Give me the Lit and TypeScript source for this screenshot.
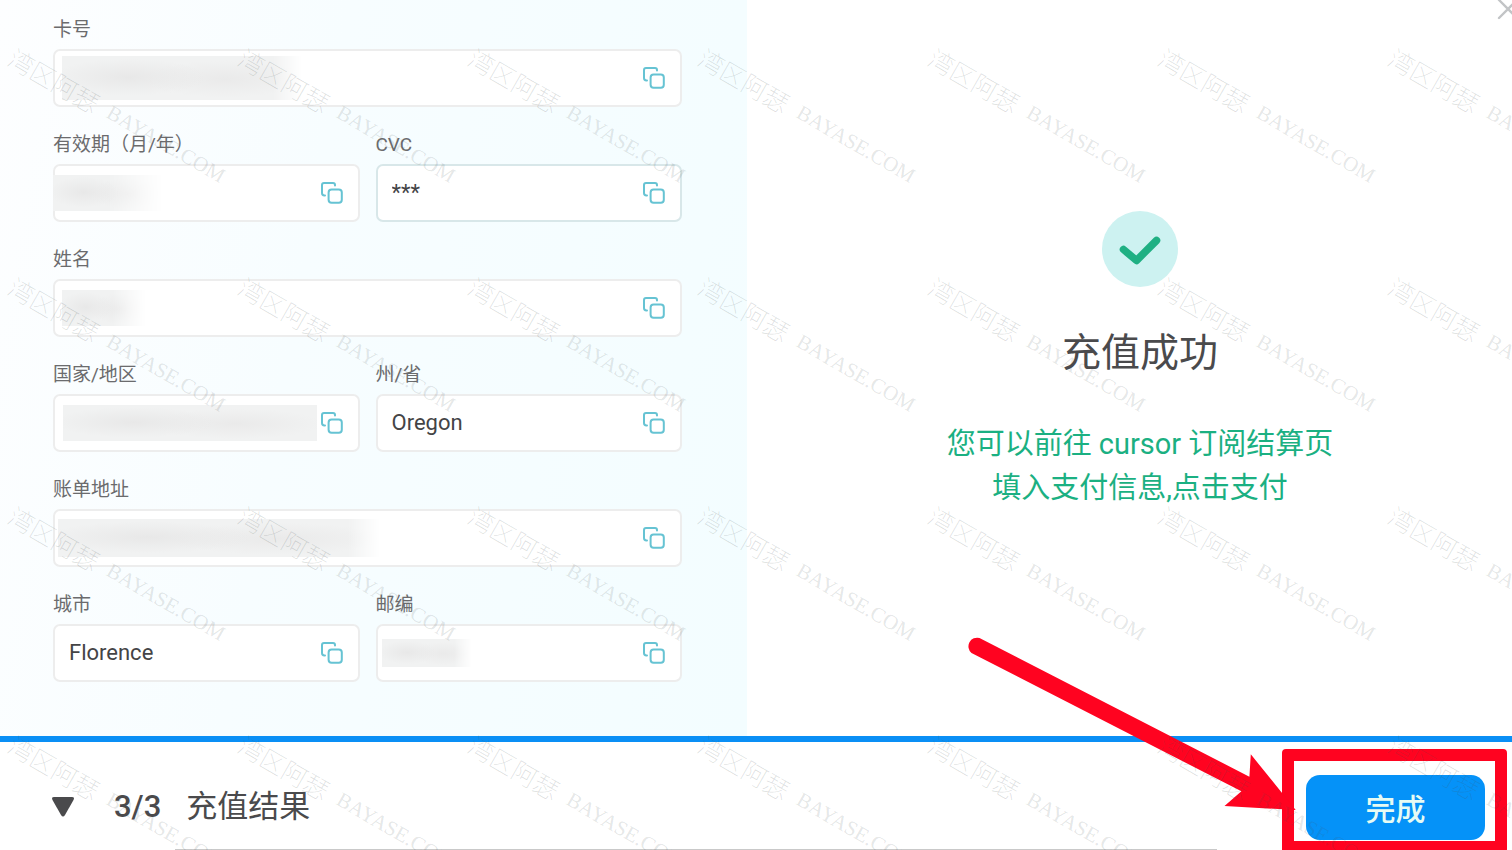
import { LitElement, html, css, svg } from "lit";
import { customElement, property } from "lit/decorators.js";
import { styleMap } from "lit/directives/style-map.js";
import { classMap } from "lit/directives/class-map.js";

interface Mask {
  left: number;
  width: number;
  height: number;
  fade: number;
}

interface Field {
  id: string;
  label: string;
  value: string;
  wide?: boolean;
  active?: boolean;
  mask?: Mask;
}

const FIELDS: Field[] = [
  { id: "card", label: "卡号", value: "", wide: true, mask: { left: 9, width: 240, height: 44, fade: 88 } },
  { id: "expiry", label: "有效期（月/年）", value: "", mask: { left: 0, width: 110, height: 36, fade: 50 } },
  { id: "cvc", label: "CVC", value: "***", active: true },
  { id: "name", label: "姓名", value: "", wide: true, mask: { left: 9, width: 84, height: 36, fade: 60 } },
  { id: "country", label: "国家/地区", value: "", mask: { left: 10, width: 254, height: 36, fade: 100 } },
  { id: "state", label: "州/省", value: "Oregon" },
  { id: "address", label: "账单地址", value: "", wide: true, mask: { left: 5, width: 322, height: 38, fade: 90 } },
  { id: "city", label: "城市", value: "Florence" },
  { id: "zip", label: "邮编", value: "", mask: { left: 6, width: 90, height: 28, fade: 80 } },
];

@customElement("copy-field")
export class CopyField extends LitElement {
  @property({ attribute: false }) field!: Field;

  static styles = css`
    :host {
      display: flex;
      flex-direction: column;
      gap: 7px;
      min-width: 0;
    }
    .label {
      font-size: 19px;
      line-height: 24px;
      color: #6b6b6d;
      white-space: nowrap;
    }
    .box {
      position: relative;
      display: flex;
      align-items: center;
      box-sizing: border-box;
      height: 58px;
      padding: 0 15px 0 14px;
      border: 2px solid #ededed;
      border-radius: 7px;
      background: #fff;
    }
    .box.active {
      border-color: #d8e7e9;
    }
    .input {
      flex: 1;
      min-width: 0;
      padding: 0;
      border: 0;
      outline: 0;
      background: transparent;
      color: #444446;
      font: inherit;
      font-size: 22px;
      line-height: 28px;
    }
    .copy {
      display: flex;
      padding: 0;
      border: 0;
      background: transparent;
      color: #66c3d3;
      cursor: pointer;
    }
    .mask {
      position: absolute;
      top: 0;
      bottom: 0;
      margin: auto 0;
      background:
        radial-gradient(ellipse 32% 42% at 28% 48%, #e8e8e8, transparent),
        radial-gradient(ellipse 34% 42% at 68% 52%, #eaeaea, transparent),
        #f1f2f2;
    }
  `;

  render() {
    const f = this.field;
    const m = f.mask;
    return html`
      <label class="label" for=${f.id}>${f.label}</label>
      <div class=${classMap({ box: true, active: !!f.active })}>
        ${m
          ? html`<span
              class="mask"
              style=${styleMap({
                left: `${m.left - 2}px`,
                width: `${m.width}px`,
                height: `${m.height}px`,
                maskImage: m.fade < 100 ? `linear-gradient(90deg, #000 ${m.fade}%, transparent)` : "none",
              })}
            ></span>`
          : ""}
        <input class="input" id=${f.id} type="text" readonly .value=${f.value} />
        <button class="copy" type="button" aria-label="复制">
          <svg width="22" height="22" viewBox="0 0 22 22" fill="none" stroke="currentColor" stroke-width="2" stroke-linecap="round">
            <path d="M4 13.4H3.4a2.4 2.4 0 0 1-2.4-2.4V3A2 2 0 0 1 3 1H12a2 2 0 0 1 2 2v.6" />
            <rect x="7.6" y="7.6" width="13.2" height="13.2" rx="3" />
          </svg>
        </button>
      </div>
    `;
  }
}

@customElement("water-mark")
export class WaterMark extends LitElement {
  static styles = css`
    :host {
      position: absolute;
      inset: 0;
      z-index: 5;
      overflow: hidden;
      pointer-events: none;
    }
    .tiles {
      display: grid;
      grid-template-columns: repeat(7, 230px);
      grid-auto-rows: 229px;
    }
    .tile {
      display: flex;
      align-items: center;
      justify-content: center;
      box-sizing: border-box;
      padding: 2px 0 0 4px;
    }
    .text {
      display: flex;
      align-items: center;
      gap: 12px;
      flex: none;
      transform: rotate(30deg);
      white-space: nowrap;
      line-height: 26px;
    }
    .han {
      font-family: "Noto Sans CJK SC", sans-serif;
      font-weight: 100;
      font-size: 25px;
      color: rgba(70, 80, 80, 0.2);
    }
    .latin {
      font-family: "Liberation Serif", serif;
      font-size: 21px;
      color: rgba(70, 80, 80, 0.15);
    }
  `;

  render() {
    return html`<div class="tiles" aria-hidden="true">
      ${Array.from(
        { length: 28 },
        () => html`<div class="tile"><span class="text"><span class="han">湾区阿瑟</span><span class="latin">BAYASE.COM</span></span></div>`
      )}
    </div>`;
  }
}

const arrow = svg`<path d="M979.500 638 L1249.400 776.700 L1250.800 754.300 L1295.700 810 L1224.500 806 L1241.400 791.300 L971.500 653 A8.700 8.700 0 0 1 979.500 638 Z" fill="#ff0320" />`;

@customElement("app-root")
export class AppRoot extends LitElement {
  static styles = css`
    :host {
      display: flex;
      flex-direction: column;
      position: relative;
      box-sizing: border-box;
      height: 100vh;
      overflow: hidden;
      background: #fff;
      color: #4a4a4c;
      font-family: Roboto, "Noto Sans CJK SC", sans-serif;
    }
    .main {
      flex: 1;
      display: grid;
      grid-template-columns: 747fr 765fr;
    }
    .form {
      display: grid;
      grid-template-columns: 1fr 1fr;
      align-content: start;
      gap: 26px 16px;
      padding: 18px 65px 0 53px;
      background: linear-gradient(100deg, #fdfeff 0%, #f7fdff 40%, #f3fdff 100%);
    }
    .wide {
      grid-column: 1 / -1;
    }
    .result {
      display: flex;
      flex-direction: column;
      align-items: center;
      padding: 211px 0 0 21px;
      text-align: center;
    }
    .badge {
      display: block;
    }
    .title {
      margin: 38px 0 0;
      font-size: 39px;
      line-height: 56px;
      font-weight: 400;
    }
    .hint {
      margin: 41px 0 0;
      font-size: 29px;
      line-height: 44px;
      color: #1bb082;
    }
    .close {
      position: absolute;
      top: -3px;
      right: -8px;
      display: flex;
      padding: 0;
      border: 0;
      background: transparent;
      color: #c2c4c6;
    }
    .footer {
      display: flex;
      align-items: center;
      box-sizing: border-box;
      height: 114px;
      padding: 22px 27px 0 51px;
      border-top: 6px solid #0a8ff5;
    }
    .toggle {
      display: flex;
      padding: 0;
      border: 0;
      background: transparent;
      color: #4a4a4c;
    }
    .step {
      margin-left: 39px;
      font-size: 31px;
      line-height: 40px;
      font-weight: 500;
    }
    .name {
      margin-left: 25px;
      font-size: 31px;
      line-height: 40px;
    }
    .action {
      position: relative;
      margin-left: auto;
    }
    .done {
      display: block;
      width: 179px;
      height: 65px;
      padding: 0;
      border: 0;
      border-radius: 14px;
      background: #0592f8;
      color: #e6fbf4;
      font: inherit;
      font-size: 30px;
      font-weight: 500;
    }
    .frame {
      position: absolute;
      inset: -26px -22px -13px -24px;
      border: 12px solid #ff0320;
      border-radius: 4px;
      pointer-events: none;
    }
    .arrow {
      position: absolute;
      right: 179px;
      bottom: 0;
      pointer-events: none;
    }
    .rule {
      position: absolute;
      left: 175px;
      right: 295px;
      bottom: 0;
      height: 1px;
      background: #c9c9c9;
    }
  `;

  render() {
    return html`
      <main class="main">
        <form class="form">
          ${FIELDS.map((f) => html`<copy-field class=${classMap({ wide: !!f.wide })} .field=${f}></copy-field>`)}
        </form>
        <section class="result">
          <svg class="badge" width="76" height="76" viewBox="0 0 76 76">
            <circle cx="38" cy="38" r="38" fill="#cdf2f1" />
            <path d="M21.500 38.500L34.500 49.500L54.500 29.500" fill="none" stroke="#1fb083" stroke-width="7.500" stroke-linecap="round" stroke-linejoin="round" />
          </svg>
          <h1 class="title">充值成功</h1>
          <p class="hint">您可以前往 cursor 订阅结算页<br />填入支付信息,点击支付</p>
        </section>
      </main>
      <button class="close" type="button" aria-label="关闭">
        <svg width="24" height="24" viewBox="0 0 24 24" stroke="currentColor" stroke-width="2.400" stroke-linecap="round">
          <path d="M3 3L21 21M21 3L3 21" />
        </svg>
      </button>
      <footer class="footer">
        <button class="toggle" type="button" aria-label="收起">
          <svg width="24" height="22" viewBox="0 0 24 22" fill="currentColor">
            <path d="M3 1H21Q24 1 22.500 4L14 19Q12 22 10 19L1.500 4Q0 1 3 1Z" />
          </svg>
        </button>
        <span class="step">3/3</span>
        <span class="name">充值结果</span>
        <div class="action">
          <button class="done" type="button">完成</button>
          <div class="frame"></div>
          <svg class="arrow" width="346" height="210" viewBox="960 630 346 210">${arrow}</svg>
        </div>
      </footer>
      <div class="rule"></div>
      <water-mark></water-mark>
    `;
  }
}
